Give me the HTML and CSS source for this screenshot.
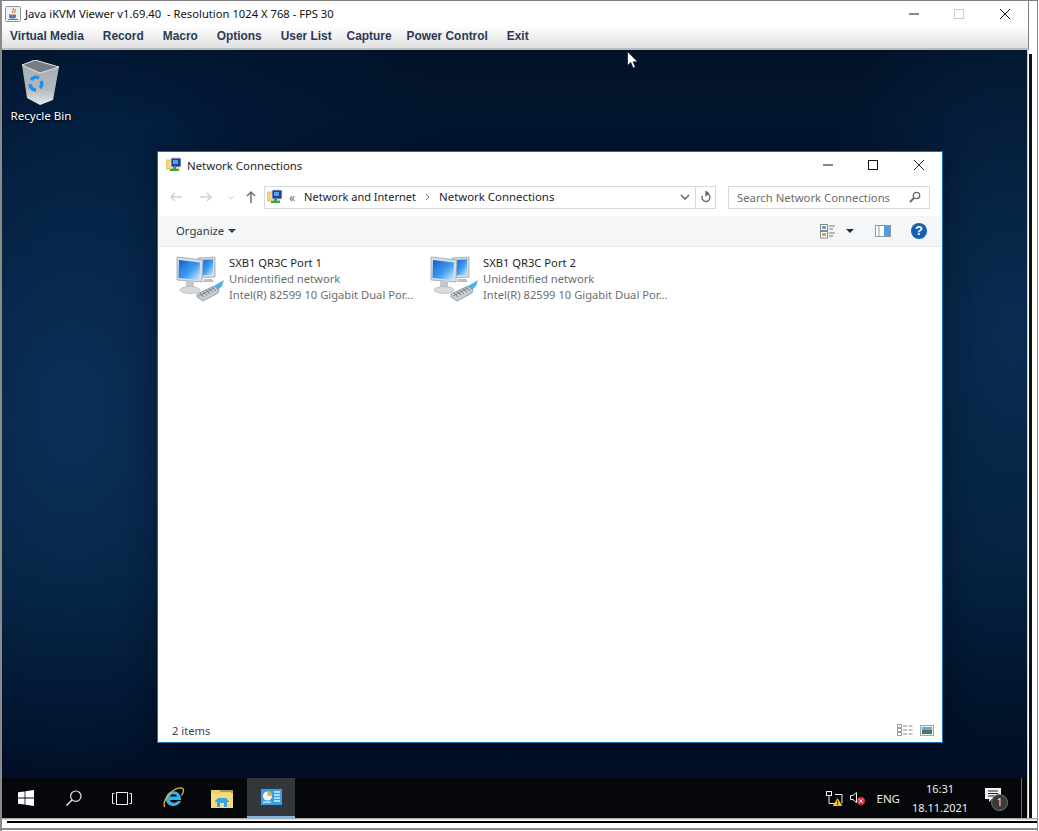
FILE: index.html
```html
<!DOCTYPE html>
<html lang="en">
<head>
    <meta charset="UTF-8">
    <title>Java iKVM Viewer</title>
    <link rel="stylesheet" href="styles.css">
</head>
<body>
    <svg class="defs" width="0" height="0">
        <defs>
            <linearGradient id="screenBlue" x1="0" y1="0" x2="1" y2="1">
                <stop offset="0" stop-color="#0f5fd0"/>
                <stop offset=".55" stop-color="#3f9cf0"/>
                <stop offset="1" stop-color="#d5ecfb"/>
            </linearGradient>
            <linearGradient id="binGrey" x1="0" y1="0" x2="0" y2="1">
                <stop offset="0" stop-color="#a4abb0"/>
                <stop offset=".65" stop-color="#b4b9bc"/>
                <stop offset="1" stop-color="#e8eaeb"/>
            </linearGradient>
            <symbol id="netFolder" viewBox="0 0 16 16">
                <path d="M0 3h5l1-2h7v11H0z" fill="#f0d77c" stroke="#c9a94a" stroke-width=".6"/>
                <rect x="5" y="1" width="10" height="9" fill="#1d3f8f" stroke="#dfe6f2" stroke-width=".8"/>
                <rect x="7" y="3" width="5" height="4" fill="#5aa0e8"/>
                <rect x="4" y="12" width="9" height="2" fill="#2fa84f"/>
                <rect x="7" y="10" width="3" height="3" fill="#2fa84f"/>
            </symbol>
            <symbol id="netAdapter" viewBox="0 0 50 47">
                <path d="M23 3l17-1v20l-17 1z" fill="#d4dbe0" stroke="#9aa5ad" stroke-width=".8"/>
                <path d="M26 5l12-.7v15.500l-12 .7z" fill="url(#screenBlue)"/>
                <path d="M29 24h8l2 3h-11z" fill="#b9c0c5"/>
                <path d="M2 2l26 3-1 22-25-2z" fill="#d8dee2" stroke="#98a3ab" stroke-width=".8"/>
                <path d="M4 5l21 2.500-.8 17.500L3.500 23z" fill="url(#screenBlue)"/>
                <path d="M11 26l8 .7v7l-8-.7z" fill="#c2c8cc"/>
                <ellipse cx="15" cy="35" rx="10" ry="3.500" fill="#d7dbdd" stroke="#a5acb1" stroke-width=".6"/>
                <path d="M22 39l17-8 5 4 -1 3-15 8-6-4z" fill="#c6ced1" stroke="#77848a" stroke-width=".7"/>
                <path d="M25 38l4 4M28 36.500l4 4M31 35l4 4M34 33.500l4 4M37 32l4 4M24 41l15-8" stroke="#5d6b72" stroke-width=".8" fill="none"/>
                <path d="M39 31l5-3 5-3-2 6-4 4z" fill="#4eb1e6"/>
            </symbol>
        </defs>
    </svg>

    <div class="viewer">
        <header class="title-bar">
            <svg class="java-icon" viewBox="0 0 16 16">
                <rect x=".5" y=".5" width="15" height="15" rx="1" fill="#eef0f3" stroke="#8c96a3"/>
                <path d="M8 2c2 2-2 3 0 5M10 3c1 1-1 2 0 4" stroke="#e0762a" stroke-width="1.200" fill="none"/>
                <path d="M4 8.500h7v2c0 1.500-1 2-2 2H6c-1 0-2-.5-2-2z" fill="#5b7ea8"/>
                <path d="M3 13.500h10" stroke="#5b7ea8"/>
            </svg>
            <span class="title-text">Java iKVM Viewer v1.69.40&nbsp; - Resolution 1024 X 768 - FPS 30</span>
            <div class="title-controls">
                <svg class="ctl" viewBox="0 0 10 10"><path d="M0 5h10" stroke="#111" stroke-width="1"/></svg>
                <svg class="ctl" viewBox="0 0 10 10"><rect x=".5" y=".5" width="9" height="9" fill="none" stroke="#ccc"/></svg>
                <svg class="ctl" viewBox="0 0 10 10"><path d="M0 0l10 10M10 0L0 10" stroke="#111" stroke-width="1"/></svg>
            </div>
        </header>

        <nav class="menu-bar">
            <span class="menu-item">Virtual Media</span>
            <span class="menu-item">Record</span>
            <span class="menu-item">Macro</span>
            <span class="menu-item">Options</span>
            <span class="menu-item tight">User List</span>
            <span class="menu-item tight">Capture</span>
            <span class="menu-item">Power Control</span>
            <span class="menu-item">Exit</span>
        </nav>

        <div class="screen-row">
            <main class="desktop">
                <div class="desktop-area">
                    <div class="desktop-icon">
                        <svg class="bin-icon" viewBox="0 0 40 46">
                            <path d="M1 5L14 0l24 7-6 33-13 5-13-7z" fill="url(#binGrey)"/>
                            <path d="M1 5L14 0l24 7-19 6z" fill="#767d82" stroke="#dfe2e4" stroke-width="1"/>
                            <g fill="none" stroke="#1e90ea" stroke-width="3.400">
                                <path d="M10 20a6 6 0 0 1 8-2"/>
                                <path d="M20 21a6 6 0 0 1-1 7"/>
                                <path d="M15 30a6 6 0 0 1-6-6"/>
                            </g>
                        </svg>
                        <span class="desktop-label">Recycle Bin</span>
                    </div>

                    <section class="window">
                        <div class="win-title">
                            <svg class="small-icon"><use href="#netFolder"/></svg>
                            <span class="win-title-text">Network Connections</span>
                            <div class="win-controls">
                                <svg class="ctl" viewBox="0 0 10 10"><path d="M0 5h10" stroke="#111"/></svg>
                                <svg class="ctl" viewBox="0 0 10 10"><rect x=".5" y=".5" width="9" height="9" fill="none" stroke="#111"/></svg>
                                <svg class="ctl" viewBox="0 0 10 10"><path d="M0 0l10 10M10 0L0 10" stroke="#222"/></svg>
                            </div>
                        </div>

                        <div class="win-nav">
                            <div class="nav-arrows">
                                <svg class="arrow" viewBox="0 0 14 12"><path d="M13 6H2M6 2L2 6l4 4" fill="none" stroke="#d0d0d0" stroke-width="1.500"/></svg>
                                <svg class="arrow" viewBox="0 0 14 12"><path d="M1 6h11M8 2l4 4-4 4" fill="none" stroke="#d0d0d0" stroke-width="1.500"/></svg>
                                <svg class="chev" viewBox="0 0 8 5"><path d="M1 1l3 3 3-3" fill="none" stroke="#d0d0d0"/></svg>
                                <svg class="arrow up" viewBox="0 0 12 14"><path d="M6 13V2M2 6l4-4 4 4" fill="none" stroke="#707070" stroke-width="1.500"/></svg>
                            </div>
                            <div class="address">
                                <svg class="small-icon"><use href="#netFolder"/></svg>
                                <span class="crumb-more">«</span>
                                <span class="crumb narrow">Network and Internet</span>
                                <svg class="crumb-sep" viewBox="0 0 5 8"><path d="M1 1l3 3-3 3" fill="none" stroke="#777"/></svg>
                                <span class="crumb">Network Connections</span>
                                <svg class="addr-chev" viewBox="0 0 10 6"><path d="M1 1l4 4 4-4" fill="none" stroke="#555" stroke-width="1.300"/></svg>
                                <div class="refresh">
                                    <svg class="refresh-icon" viewBox="0 0 12 12"><path d="M6 2.500a4 4 0 1 1-3.600 2.300M6 .5v4L8.500 2.500z" fill="none" stroke="#666" stroke-width="1.300"/></svg>
                                </div>
                            </div>
                            <div class="search">
                                <span class="search-text">Search Network Connections</span>
                                <svg class="search-icon" viewBox="0 0 12 12"><circle cx="7.500" cy="4.500" r="3.200" fill="none" stroke="#666" stroke-width="1.300"/><path d="M5 7l-4 4" stroke="#666" stroke-width="1.800"/></svg>
                            </div>
                        </div>

                        <div class="win-toolbar">
                            <span class="organize">Organize</span>
                            <span class="caret"></span>
                            <div class="toolbar-right">
                                <svg class="view-icon" viewBox="0 0 16 15">
                                    <rect x=".5" y=".5" width="7" height="6" fill="#fff" stroke="#888"/>
                                    <rect x=".5" y="7.500" width="7" height="6.500" fill="#fff" stroke="#888"/>
                                    <rect x="2" y="2" width="4" height="3" fill="#6a9fd0"/>
                                    <rect x="2" y="9" width="4" height="3" fill="#b9b14a"/>
                                    <path d="M9 2h6M9 5h4M9 9h6M9 12h4" stroke="#777"/>
                                </svg>
                                <span class="caret dark"></span>
                                <svg class="pane-icon" viewBox="0 0 16 12">
                                    <rect x=".5" y=".5" width="15" height="11" fill="#fff" stroke="#8c9aa8"/>
                                    <rect x="9" y="1" width="6" height="10" fill="#4f9ce0"/>
                                    <path d="M4 1v10" stroke="#8c9aa8"/>
                                </svg>
                                <span class="help">?</span>
                            </div>
                        </div>

                        <div class="win-content">
                            <div class="conn-item">
                                <svg class="conn-icon"><use href="#netAdapter"/></svg>
                                <div class="conn-text">
                                    <span class="conn-name">SXB1 QR3C Port 1</span>
                                    <span>Unidentified network</span>
                                    <span>Intel(R) 82599 10 Gigabit Dual Por...</span>
                                </div>
                            </div>
                            <div class="conn-item">
                                <svg class="conn-icon"><use href="#netAdapter"/></svg>
                                <div class="conn-text">
                                    <span class="conn-name">SXB1 QR3C Port 2</span>
                                    <span>Unidentified network</span>
                                    <span>Intel(R) 82599 10 Gigabit Dual Por...</span>
                                </div>
                            </div>
                        </div>

                        <div class="win-status">
                            <span>2 items</span>
                            <div class="status-right">
                                <svg class="status-list" viewBox="0 0 16 12">
                                    <path d="M.5 .5h4v3h-4zM.5 4.500h4v3h-4zM.5 8.500h4v3h-4z" fill="none" stroke="#999"/>
                                    <path d="M6 2h4M11.500 2h4M6 6h4M11.500 6h4M6 10h4M11.500 10h4" stroke="#888"/>
                                </svg>
                                <svg class="status-pic" viewBox="0 0 14 11">
                                    <rect x=".5" y=".5" width="13" height="10" fill="#eef2f5" stroke="#9aa5ae"/>
                                    <rect x="2" y="2" width="10" height="3" fill="#6ea6cc"/>
                                    <rect x="2" y="5" width="10" height="4" fill="#4f7468"/>
                                </svg>
                            </div>
                        </div>
                    </section>
                </div>

                <footer class="taskbar">
                    <div class="task-btn">
                        <svg class="start-icon" viewBox="0 0 16 16"><path d="M0 2.300l6.600-.9v6.200H0zM7.400 1.300L16 0v7.600H7.400zM0 8.400h6.600v6.200L0 13.700zM7.400 8.400H16V16l-8.600-1.300z" fill="#fff"/></svg>
                    </div>
                    <div class="task-btn">
                        <svg class="tb-icon" viewBox="0 0 16 16"><circle cx="9.800" cy="6.200" r="5.200" fill="none" stroke="#e8e8e8" stroke-width="1.200"/><path d="M6 10L.5 15.500" stroke="#e8e8e8" stroke-width="1.400"/></svg>
                    </div>
                    <div class="task-btn">
                        <svg class="view-btn-icon" viewBox="0 0 20 13"><rect x="4.500" y=".5" width="11" height="12" fill="none" stroke="#eee"/><path d="M2.500 1.500H.5v10h2M17.500 1.500h2v10h-2" fill="none" stroke="#eee"/></svg>
                    </div>
                    <div class="task-btn pin first-pin">
                        <svg class="ie-icon" viewBox="0 0 22 22">
                            <path d="M4 11.500a7.500 7.500 0 0 1 14-3.500c1 2 1 3.500 1 5H8c.3 3 5 4 8 1h3c-2.500 6-12 7-14.500 1-.6-1.300-.7-2.500-.5-3.500zM8 9.500h7c-.6-3-6.200-3-7 0z" fill="#35b4e8" fill-rule="evenodd"/>
                            <path d="M3 20C0 17 5 7 12 3c4-2.500 9-3 9.500 0 .3 2-1 4-2 5.500" fill="none" stroke="#e9b52a" stroke-width="1.300"/>
                        </svg>
                    </div>
                    <div class="task-btn pin">
                        <svg class="folder-icon" viewBox="0 0 22 19">
                            <path d="M0 1h8l2 2h10v4H0z" fill="#e3bf56"/>
                            <rect y="4" width="22" height="15" fill="#f6dc80"/>
                            <path d="M0 1h22v3H0z" fill="#f2d674" opacity=".7"/>
                            <path d="M7 9h8l3 3v1h-2v5H6v-5H4v-1z" fill="#3ba3e0"/>
                            <rect x="9" y="14" width="4" height="4" fill="#f6dc80"/>
                        </svg>
                    </div>
                    <div class="task-btn active">
                        <svg class="cp-icon" viewBox="0 0 21 16">
                            <rect width="21" height="16" fill="#35a2e6"/>
                            <circle cx="6.500" cy="7" r="4.500" fill="#f7f7f7"/>
                            <path d="M6.500 7V2.500a4.500 4.500 0 0 1 4.500 4.500z" fill="#e8b22e"/>
                            <path d="M13 3h6M13 6h6M13 9h6M13 12h6" stroke="#d8f0ff" stroke-width="1.300"/>
                            <rect x="2" y="12.500" width="8" height="1.500" fill="#bfe4fb"/>
                        </svg>
                    </div>

                    <div class="tray">
                        <svg class="tray-net" viewBox="0 0 17 15">
                            <rect x=".5" y=".5" width="5" height="4" fill="none" stroke="#eee"/>
                            <path d="M3 5v7.500h9M9 3.500h7v9" fill="none" stroke="#eee"/>
                            <path d="M11.500 7l4.800 8h-9.600z" fill="#f5c518"/>
                            <path d="M11.500 9.500v3M11.500 13.200v1" stroke="#222"/>
                        </svg>
                        <svg class="tray-vol" viewBox="0 0 15 14">
                            <path d="M.5 4.500h2.500L6.500 1.500v10L3 8.500H.5z" fill="none" stroke="#eee"/>
                            <circle cx="11" cy="10" r="4" fill="#d8323c"/>
                            <path d="M9.300 8.300l3.400 3.400M12.700 8.300l-3.400 3.400" stroke="#fff"/>
                        </svg>
                        <span class="tray-lang">ENG</span>
                        <div class="clock">
                            <span>16:31</span>
                            <span>18.11.2021</span>
                        </div>
                        <div class="notif">
                            <svg class="notif-icon" viewBox="0 0 16 15"><path d="M0 0h16v11H7l-3 3v-3H0z" fill="#f2f2f2"/><path d="M3 3h10M3 5.500h10M3 8h7" stroke="#222"/></svg>
                            <span class="notif-badge">1</span>
                        </div>
                        <span class="tray-edge"></span>
                    </div>
                </footer>
            </main>
            <div class="frame-right"></div>
        </div>

        <div class="frame-bottom"></div>
    </div>

    <svg class="cursor" viewBox="0 0 12 18"><path d="M.5 .5v14l3.300-3 2.200 5.500 2.300-1-2.200-5.200h4.500z" fill="#fff" stroke="#111" stroke-width=".7"/></svg>
</body>
</html>
```

FILE: styles.css
```css
html, body {
    margin: 0;
    padding: 0;
    background: #fff;
}

body {
    font-family: "Noto Sans", "Open Sans", sans-serif;
    font-size: 12px;
    color: #1e1e1e;
    overflow: hidden;
}

.defs {
    position: absolute;
}

.viewer {
    width: 1038px;
    height: 831px;
    display: flex;
    flex-direction: column;
    box-sizing: border-box;
    border-top: 1px solid #808080;
    border-left: 2px solid #8a8a8a;
    border-right: 1px solid #8a8a8a;
    background: #fff;
}

/* viewer title + menu */
.title-bar {
    height: 25px;
    width: 1027px;
    box-sizing: border-box;
    display: flex;
    align-items: center;
    background: #fff;
    border-right: 1px solid #808080;
    flex: none;
}

.java-icon {
    width: 16px;
    height: 16px;
    margin-left: 3px;
}

.title-text {
    margin-left: 4px;
    font-size: 11.220px;
    color: #111;
}

.title-controls {
    margin-left: auto;
    display: flex;
    gap: 35px;
    padding-right: 18px;
}

.ctl {
    width: 10px;
    height: 10px;
    display: block;
}

.ctl:last-child {
    margin-left: 1px;
}

.menu-bar {
    height: 24px;
    width: 1027px;
    flex: none;
    box-sizing: border-box;
    display: flex;
    align-items: center;
    gap: 19px;
    padding-left: 8px;
    padding-bottom: 2px;
    background: linear-gradient(#fff 0%, #f4f4f4 35%, #e0e0e0 100%);
    border-bottom: 2px solid #b9bcbf;
    border-right: 1px solid #808080;
    font-family: "Liberation Sans", Arial, sans-serif;
    font-size: 11.900px;
    font-weight: bold;
    color: #2b3a55;
}

.menu-item.tight {
    margin-right: -4px;
}

/* remote screen */
.screen-row {
    flex: 1;
    display: flex;
    min-height: 0;
}

.desktop {
    width: 1025px;
    flex: none;
    display: flex;
    flex-direction: column;
    background: #000;
    border-right: 1px solid #c4c8cc;
}

.desktop-area {
    position: relative;
    flex: 1;
    background:
        radial-gradient(ellipse 240px 380px at 70px 360px, rgba(18, 70, 120, .5), transparent 100%),
        radial-gradient(ellipse 200px 380px at 1010px 280px, rgba(18, 70, 115, .42), transparent 100%),
        radial-gradient(ellipse 300px 200px at 140px 80px, rgba(0, 40, 85, .3), transparent 100%),
        linear-gradient(#021229 0%, #031a38 35%, #031c38 70%, #010e26 100%);
}

.frame-right {
    flex: 1;
    margin-left: 1px;
    background:
        linear-gradient(#fff, #fff) top / 100% 4px no-repeat,
        linear-gradient(90deg, #111 3px, #fff 3px);
}

.frame-bottom {
    height: 13px;
    flex: none;
    box-sizing: border-box;
    background:
        linear-gradient(#fff, #fff) 0 3px / 5px 5px no-repeat,
        linear-gradient(#b0b0b0 0 1px, #d8d8d8 1px 2px, #fff 2px 3px, #000 3px 5px, #fff 5px 10px, #8a8a8a 10px 12px, #fff 12px);
}

.desktop-icon {
    position: absolute;
    left: 0;
    top: 10px;
    width: 78px;
    display: flex;
    flex-direction: column;
    align-items: center;
}

.bin-icon {
    width: 40px;
    height: 46px;
}

.desktop-label {
    margin-top: 2px;
    color: #fff;
    font-size: 11.600px;
    text-shadow: 0 1px 2px #000;
}

/* explorer window */
.window {
    position: absolute;
    left: 155px;
    top: 101px;
    width: 786px;
    height: 592px;
    box-sizing: border-box;
    display: flex;
    flex-direction: column;
    background: #fff;
    border: 1px solid #1670b8;
    box-shadow: 0 2px 24px rgba(0, 0, 0, .35);
}

.win-title {
    height: 27px;
    box-sizing: border-box;
    display: flex;
    align-items: center;
    padding-left: 8px;
    padding-bottom: 1px;
    flex: none;
}

.small-icon {
    width: 16px;
    height: 16px;
    flex: none;
}

.win-title-text {
    margin-left: 5px;
    font-size: 11.400px;
}

.win-controls {
    margin-left: auto;
    display: flex;
    gap: 35px;
    padding-right: 18px;
}

.win-nav {
    height: 37px;
    flex: none;
    display: flex;
    align-items: center;
    padding-bottom: 1px;
    box-sizing: border-box;
}

.nav-arrows {
    width: 106px;
    display: flex;
    align-items: center;
    flex: none;
    padding-left: 11px;
    box-sizing: border-box;
}

.arrow {
    width: 14px;
    height: 12px;
    margin-right: 16px;
}

.chev {
    width: 8px;
    height: 5px;
    margin-right: 10px;
    margin-left: -2px;
}

.arrow.up {
    width: 12px;
    height: 14px;
    margin-right: 0;
}

.address {
    width: 452px;
    height: 23px;
    box-sizing: border-box;
    border: 1px solid #d9d9d9;
    display: flex;
    align-items: center;
    padding-left: 2px;
    flex: none;
}

.crumb {
    font-size: 11.400px;
    margin-bottom: 2px;
}

.crumb.narrow {
    font-size: 11px;
}

.crumb-more {
    margin: 0 9px 0 6px;
    color: #666;
}

.crumb-sep {
    width: 5px;
    height: 8px;
    margin: 0 9px;
}

.addr-chev {
    width: 10px;
    height: 6px;
    margin-left: auto;
    margin-right: 5px;
}

.refresh {
    width: 20px;
    height: 21px;
    box-sizing: border-box;
    border-left: 1px solid #d9d9d9;
    display: flex;
    align-items: center;
    justify-content: center;
}

.refresh-icon {
    width: 12px;
    height: 12px;
}

.search {
    width: 202px;
    height: 23px;
    margin-left: 12px;
    box-sizing: border-box;
    border: 1px solid #d9d9d9;
    display: flex;
    align-items: center;
    justify-content: space-between;
    padding: 0 8px;
    flex: none;
}

.search-text {
    color: #6d6d6d;
    font-size: 11.300px;
}

.search-icon {
    width: 12px;
    height: 12px;
}

.win-toolbar {
    height: 31px;
    flex: none;
    box-sizing: border-box;
    display: flex;
    align-items: center;
    background: #f5f6f7;
    border-bottom: 1px solid #e6e6e6;
    padding-left: 18px;
}

.organize {
    font-size: 11.300px;
    color: #2e3f4e;
    margin-bottom: 2px;
}

.caret {
    width: 0;
    height: 0;
    margin-left: 4px;
    border-left: 4px solid transparent;
    border-right: 4px solid transparent;
    border-top: 4px solid #2e3f4e;
}

.caret.dark {
    margin: 0 0 0 10px;
    border-top-color: #1e2d40;
}

.toolbar-right {
    margin-left: auto;
    display: flex;
    align-items: center;
    padding-right: 15px;
}

.view-icon {
    width: 16px;
    height: 15px;
}

.pane-icon {
    width: 16px;
    height: 12px;
    margin-left: 21px;
}

.help {
    width: 16px;
    height: 16px;
    margin-left: 20px;
    border-radius: 50%;
    background: #1560b4;
    color: #fff;
    font-family: "Liberation Sans", Arial, sans-serif;
    font-size: 13px;
    font-weight: bold;
    line-height: 16px;
    text-align: center;
}

.win-content {
    flex: 1;
    display: grid;
    grid-template-columns: 254px 254px;
    align-content: start;
    padding: 8px 0 0 17px;
}

.conn-item {
    display: flex;
    align-items: flex-start;
}

.conn-icon {
    width: 50px;
    height: 47px;
    flex: none;
}

.conn-text {
    display: flex;
    flex-direction: column;
    margin-left: 4px;
    color: #6d6d6d;
    font-size: 11.200px;
    line-height: 16px;
    white-space: nowrap;
}

.conn-name {
    color: #1e1e1e;
}

.win-status {
    height: 24px;
    flex: none;
    display: flex;
    align-items: center;
    justify-content: space-between;
    padding: 0 8px 0 14px;
    font-size: 11.200px;
    color: #444;
}

.status-right {
    display: flex;
    align-items: center;
    gap: 7px;
}

.status-list {
    width: 16px;
    height: 12px;
}

.status-pic {
    width: 14px;
    height: 11px;
}

/* taskbar */
.taskbar {
    height: 40px;
    flex: none;
    display: flex;
    align-items: center;
    background: #05070a;
}

.task-btn {
    width: 48px;
    height: 100%;
    display: flex;
    align-items: center;
    justify-content: center;
    flex: none;
}

.pin {
    width: 49px;
}

.first-pin {
    margin-left: 2px;
}

.active {
    margin-left: 1px;
    box-sizing: border-box;
    background: #33363a;
    border-bottom: 2px solid #79b8e6;
}

.start-icon,
.tb-icon {
    width: 16px;
    height: 16px;
}

.view-btn-icon {
    width: 20px;
    height: 13px;
}

.ie-icon {
    width: 22px;
    height: 22px;
}

.folder-icon {
    width: 22px;
    height: 19px;
}

.cp-icon {
    width: 21px;
    height: 16px;
}

.tray {
    margin-left: auto;
    height: 100%;
    display: flex;
    align-items: center;
    color: #eee;
    font-size: 11.500px;
}

.tray-net {
    width: 17px;
    height: 15px;
}

.tray-vol {
    width: 15px;
    height: 14px;
    margin-left: 7px;
}

.tray-lang {
    margin-left: 11px;
}

.clock {
    width: 56px;
    margin-left: 12px;
    display: flex;
    flex-direction: column;
    align-items: center;
    line-height: 19px;
    white-space: nowrap;
    font-size: 11px;
}

.notif {
    position: relative;
    width: 24px;
    height: 24px;
    margin-left: 17px;
}

.notif-icon {
    width: 16px;
    height: 15px;
    position: absolute;
    left: 0;
    top: 2px;
}

.notif-badge {
    position: absolute;
    left: 6px;
    top: 8px;
    width: 15px;
    height: 15px;
    border-radius: 50%;
    background: #3a3a3a;
    border: 1px solid #777;
    font-size: 10px;
    line-height: 15px;
    text-align: center;
    color: #eee;
}

.tray-edge {
    width: 1px;
    height: 100%;
    background: #6a6d70;
    margin-left: 12px;
    margin-right: 5px;
}

.cursor {
    position: absolute;
    left: 627px;
    top: 51px;
    width: 12px;
    height: 18px;
}
```
